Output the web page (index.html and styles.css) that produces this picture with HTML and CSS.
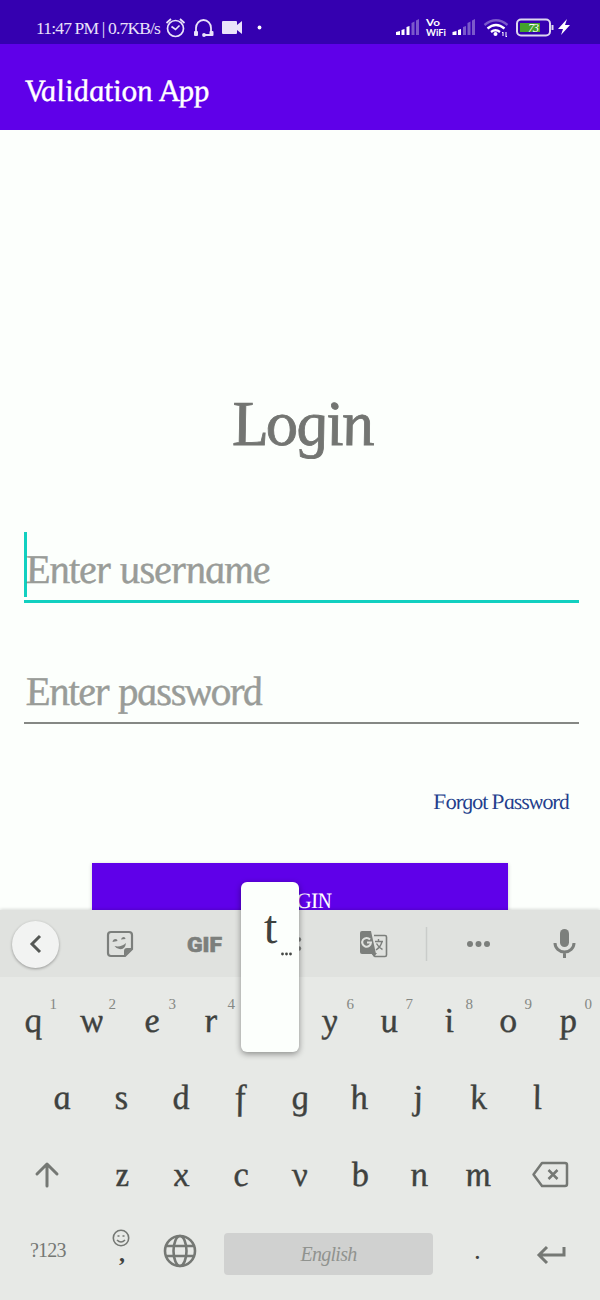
FILE: index.html
```html
<!DOCTYPE html>
<html lang="en">
<head>
<meta charset="utf-8">
<title>Validation App</title>
<link rel="stylesheet" href="styles.css">
</head>
<body>
<div class="phone">
  <header class="status">
    <span class="clock">11:47 PM | 0.7KB/s</span>
    <svg class="status-icons" width="110" height="44" viewBox="0 0 110 44" fill="none" stroke="#e9e2fa" stroke-width="1.7">
      <circle cx="13.500" cy="28.500" r="8"/><path d="M9.500 26.500l4 3 4-4M4.500 23l4.500-4M18 19l4.500 4"/>
      <path d="M34 33v-5a7.500 8 0 0 1 15 0v5M41 35h8" stroke-width="1.800"/>
      <rect x="32" y="31" width="4" height="5" rx="1" fill="#e9e2fa" stroke="none"/><rect x="47.500" y="31" width="4" height="5" rx="1" fill="#e9e2fa" stroke="none"/><circle cx="42" cy="35" r="1.900" fill="#e9e2fa" stroke="none"/>
      <path d="M61 21h13q1 0 1 1v3l5-4v13l-5-4v3q0 1-1 1H61q-1 0-1-1V22q0-1 1-1z" fill="#e9e2fa" stroke="none"/>
      <circle cx="97.500" cy="27.500" r="1.900" fill="#fff" stroke="none"/>
    </svg>
    <svg class="status-right" width="190" height="44" viewBox="0 0 190 44">
      <g fill="#fff"><path d="M6 32l4-1v4H6zM11.500 30l3-1v6h-3zM16.500 27l3-1v9h-3zM62.500 32l4-1v4h-4zM68 30l3-1v6h-3z"/><path opacity=".35" d="M21.500 23l3-1.500V35h-3zM26 20.500l3-1.500v16h-3zM73 27l3-1v9h-3zM77.500 23l3-1.500V35h-3zM82 20.500l3-1.500v16h-3z"/></g>
      <text class="carrier" x="36" y="26" textLength="14" lengthAdjust="spacingAndGlyphs">Vo</text><text class="carrier" x="36" y="35.500" textLength="20" lengthAdjust="spacingAndGlyphs">WiFi</text>
      <g fill="none" stroke="#fff" stroke-width="2.300"><path opacity=".35" d="M94.500 25q11.500-9.500 23 0"/><path d="M97.500 28.500q8.500-7 17 0M101 32q4.500-3.500 9 0"/></g><circle cx="105.500" cy="34" r="2" fill="#fff"/>
      <path d="M113 36v-4M116 32v5M112 33l1-1M117 36l-1 1" stroke="#fff" fill="none"/>
      <rect x="127" y="19.500" width="33" height="16" rx="4" fill="none" stroke="#ded7ef" stroke-width="2"/>
      <rect x="130" y="23" width="20" height="9" fill="#43a12d"/><path d="M162.500 25v5" stroke="#ded7ef" stroke-width="2"/>
      <text class="charge" x="138" y="32" textLength="11">73</text>
      <path d="M177 19l-9 10h5l-2 6 9-10h-5z" fill="#fff"/>
    </svg>
  </header>
  <div class="appbar"><h1>Validation App</h1></div>
  <main class="form">
    <h2 class="heading">Login</h2>
    <div class="field focused"><span class="caret"></span><span class="hint">Enter username</span></div>
    <div class="field"><span class="hint password">Enter password</span></div>
    <a class="forgot">Forgot Password</a>
    <div class="submit"><span>LOGIN</span></div>
  </main>
  <section class="keyboard">
    <div class="tools">
      <div class="back"><svg width="46" height="46" viewBox="0 0 46 46"><path d="M28 15l-8 8 8 8" fill="none" stroke="#555855" stroke-width="3"/></svg></div>
      <svg class="toolset" width="541" height="67" viewBox="59 0 541 67" fill="#7c7f7c">
        <path d="M111 22h18q3 0 3 3v14l-7 7h-14q-3 0-3-3V25q0-3 3-3z" fill="none" stroke="#7c7f7c" stroke-width="2.200"/>
        <path d="M114.500 36q6.500 1.500 11.500-3-1 7-6.500 6-3.500-.500-5-3zM112.500 32q.500-3 3-3 2 0 2 2zM121 29.500q.500-2.500 2.500-2.500 2 0 2 2z"/>
        <path d="M124 46l8-8h-5q-3 0-3 3z"/>
        <text class="gif" x="187" y="41.500" textLength="35" lengthAdjust="spacingAndGlyphs">GIF</text>
        <circle cx="299" cy="29.500" r="2.200"/><circle cx="299" cy="38.500" r="2.200"/>
        <path d="M362 21h9l5 23h-14q-2 0-2-2V23q0-2 2-2z"/><path d="M374 25.500h11q1.500 0 1.500 1.500v18q0 1.500-1.500 1.500h-10l-3-4" fill="none" stroke="#7c7f7c" stroke-width="1.600"/><path d="M371 43h6l-3 4z"/>
        <path d="M370 29.500a4.400 4.400 0 1 0 1 3h-4" fill="none" stroke="#e0e2df" stroke-width="2"/>
        <path d="M375 31.500h8M378.500 29v2.500M382 31.500q-1 5-6 8.500M376.500 33.500q2 4 6 6" fill="none" stroke="#7c7f7c" stroke-width="1.400"/>
        <path d="M426.500 17v34" stroke="#caccca" stroke-width="1.500"/>
        <circle cx="470" cy="34" r="3"/><circle cx="478.500" cy="34" r="3"/><circle cx="487" cy="34" r="3"/>
        <rect x="560" y="19" width="9" height="18" rx="4.500"/><path d="M555 33a9.500 9 0 0 0 19 0M564.500 42v6" fill="none" stroke="#7c7f7c" stroke-width="3"/>
      </svg>
    </div>
    <div class="row"><span class="key">q<sup>1</sup></span><span class="key">w<sup>2</sup></span><span class="key">e<sup>3</sup></span><span class="key">r<sup>4</sup></span><span class="key"></span><span class="key">y<sup>6</sup></span><span class="key">u<sup>7</sup></span><span class="key">i<sup>8</sup></span><span class="key">o<sup>9</sup></span><span class="key">p<sup>0</sup></span></div>
    <div class="row middle"><span class="key">a</span><span class="key">s</span><span class="key">d</span><span class="key">f</span><span class="key">g</span><span class="key">h</span><span class="key">j</span><span class="key">k</span><span class="key">l</span></div>
    <div class="row lower">
      <svg class="wide" width="90" height="77" viewBox="0 0 90 77"><path d="M45 50V28M35 38l10-10 10 10" fill="none" stroke="#757874" stroke-width="3" stroke-linecap="round" stroke-linejoin="round"/></svg>
      <span class="key">z</span><span class="key">x</span><span class="key">c</span><span class="key">v</span><span class="key">b</span><span class="key">n</span><span class="key">m</span>
      <svg class="wide" width="90" height="77" viewBox="0 0 90 77"><path d="M34 27h23q2 0 2 2v19q0 2-2 2H34l-8.500-11.500zM40.500 34l9 9M49.500 34l-9 9" fill="none" stroke="#757874" stroke-width="2.500" stroke-linejoin="round"/></svg>
    </div>
    <div class="bottom">
      <span class="symbols">?123</span>
      <span class="comma"><svg width="18" height="18" viewBox="0 0 18 18" fill="none" stroke="#757874" stroke-width="1.600"><circle cx="9" cy="9" r="7.700"/><path d="M5 11q4 4 8 0M5.500 7h2M10.500 7h2"/></svg><b>,</b></span>
      <svg class="globe" width="34" height="34" viewBox="0 0 34 34" fill="none" stroke="#757874" stroke-width="2.600"><circle cx="17" cy="17" r="15"/><ellipse cx="17" cy="17" rx="6.500" ry="15"/><path d="M3 12h28M3 22h28"/></svg>
      <span class="space">English</span><span class="dot">.</span>
      <svg class="enter" width="30" height="20" viewBox="0 0 30 20" fill="none" stroke="#757874" stroke-width="3"><path d="M28 2v8H3M11 2l-8 8 8 8"/></svg>
    </div>
    <div class="popup"><span>t</span><svg width="11" height="4" viewBox="0 0 11 4" fill="#444744"><circle cx="1.500" cy="2" r="1.400"/><circle cx="5.500" cy="2" r="1.400"/><circle cx="9.500" cy="2" r="1.400"/></svg></div>
  </section>
</div>
</body>
</html>
```
FILE: styles.css
```css
* { box-sizing: border-box; }
body { margin: 0; font-family: "Liberation Serif", serif; background: #fcfffc; }
.phone { width: 600px; height: 1300px; display: flex; flex-direction: column; overflow: hidden; }
.status { height: 44px; background: #3500b0; display: flex; padding-left: 36px; color: #e9e2fa; flex: none; }
.clock { width: 126px; font-size: 17.5px; letter-spacing: -.83px; line-height: 57px; white-space: nowrap; }
.status-right { margin-left: 118px; }
.carrier { font: bold 10px Lato, sans-serif; fill: #fff; }
.charge { font: italic 12px "Liberation Serif", serif; fill: #fff; }
.appbar { height: 86px; background: #5f00e9; color: #fff; padding-left: 25px; flex: none; }
h1 { margin: 0; width: 190px; font: italic 31px/93px "Liberation Serif", serif; letter-spacing: -.05px; transform: skewX(9deg); -webkit-text-stroke: .4px; white-space: nowrap; }
.form { height: 780px; flex: none; overflow: hidden; display: flex; flex-direction: column; padding: 250px 21px 0 24px; }
.heading { height: 90px; margin: 0; padding-left: 207px; font: italic 64px/87px "Liberation Serif", serif; letter-spacing: -1.8px; color: #737572; transform: skewX(9deg); -webkit-text-stroke: .8px; }
.field { height: 59px; margin-top: 63px; border-bottom: 2px solid #858884; position: relative; color: #999c98; flex: none; }
.field.focused { height: 72px; margin-top: 64px; border-bottom: 3px solid #12d0c0; }
.field.focused + .field { margin-top: 62px; }
.caret { position: absolute; left: 0; top: 1px; width: 3px; height: 65px; background: #12d0c0; }
.hint { display: block; padding-left: 1px; font-style: italic; font-size: 41px; line-height: 76px; letter-spacing: -1.2px; white-space: nowrap; transform: skewX(9deg); -webkit-text-stroke: .4px; }
.hint.password { line-height: 52px; letter-spacing: -1.5px; }
.forgot { align-self: flex-end; margin-top: 63px; margin-right: 10px; font-style: italic; font-size: 22px; line-height: 30px; letter-spacing: -1.08px; color: #243f8d; transform: skewX(9deg); }
.submit { flex: none; width: 416px; height: 77px; margin: 46px 0 0 68px; background: #5f00e9; color: #fff; font: italic 22px/76px "Liberation Serif", serif; letter-spacing: -.8px; text-align: center; box-shadow: 0 1px 4px #0003; }
.submit span { display: inline-block; transform: skewX(9deg); }
.keyboard { position: relative; height: 390px; background: #e7e9e6; color: #3f423f; flex: none; box-shadow: 0 -1px 3px #0002; }
.tools { height: 67px; background: #e0e2df; display: flex; padding-left: 12px; }
.back { width: 47px; height: 47px; margin-top: 11px; border-radius: 50%; background: #f2f3f2; box-shadow: 0 1px 3px #0005; flex: none; }
.gif { font: 900 21px Roboto, sans-serif; stroke: #7c7f7c; stroke-width: .6px; }
.row { display: flex; height: 77px; padding-left: 3px; margin-top: 5px; }
.middle { padding-left: 32px; margin-top: 0; }
.lower { padding-left: 2px; margin-top: 0; }
.key { position: relative; width: 59.4px; text-align: center; font-style: italic; font-size: 35px; line-height: 78px; flex: none; transform: skewX(9deg); -webkit-text-stroke: .4px; }
.key sup { position: absolute; right: 3px; top: 12px; font-size: 15px; font-style: normal; line-height: 20px; color: #858884; transform: skewX(-9deg); -webkit-text-stroke: 0; }
.wide { flex: none; }
.bottom { display: flex; align-items: center; height: 87px; padding: 0 0 12px 30px; }
.symbols { width: 82px; font-size: 20px; letter-spacing: -.8px; color: #757874; }
.comma { width: 51px; height: 44px; display: flex; flex-direction: column; align-items: flex-start; }
.comma b { font-size: 24px; line-height: 13px; height: 18px; padding-left: 7px; }
.space { width: 209px; height: 42px; margin: 6px 0 0 27px; border-radius: 4px; background: #d0d1d0; text-align: center; font-style: italic; font-size: 20px; line-height: 43px; letter-spacing: -.7px; color: #90938f; }
.dot { width: 103px; padding-left: 41px; font-size: 27px; }
.enter { margin-top: 8px; }
.popup { position: absolute; left: 241px; top: -28px; width: 58px; height: 170px; border-radius: 6px; background: #fcfffc; box-shadow: 0 2px 6px #0006; }
.popup span { position: absolute; left: 22px; top: 18px; font-style: italic; font-size: 48px; line-height: 54px; transform: skewX(9deg); }
.popup svg { position: absolute; left: 40px; top: 70px; }
```
